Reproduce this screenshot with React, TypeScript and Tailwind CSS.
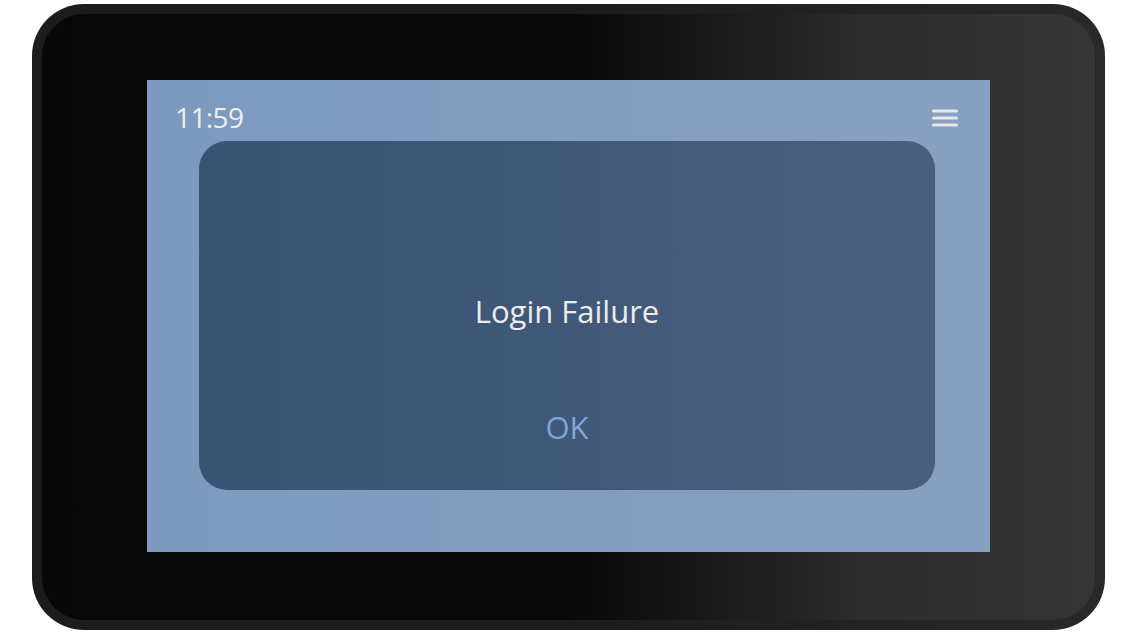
import React from "react";

const font = { fontFamily: '"Open Sans", "Noto Sans", sans-serif' };

function MenuIcon() {
  return (
    <svg width="26" height="18" viewBox="0 0 26 18" className="text-[#e8e8ea]">
      <path d="M1.5 2h23M1.5 9h23M1.5 16h23" stroke="currentColor" strokeWidth="3" strokeLinecap="round" />
    </svg>
  );
}

export default function App() {
  return (
    <div className="w-[1138px] h-[640px] bg-white overflow-hidden" style={font}>
      <div className="ml-[32px] mt-[4px] w-[1073px] h-[626px] rounded-[52px] p-[10px] bg-gradient-to-r from-[#1c1c1c] via-[#1c1c1c] to-[#292929]">
        <div className="w-full h-full rounded-[42px] bg-[linear-gradient(to_right,#070707_0%,#080808_50%,#2c2c2c_78%,#353535_100%)] pl-[105px] pt-[66px]">
          <div className="w-[843px] h-[472px] bg-gradient-to-r from-[#7d99bf] to-[#88a0c1] pt-[21px] px-[28px]">
            <div className="flex items-center justify-between h-[32px]">
              <span className="text-[28px] leading-none text-[#eeeef0] tracking-[-0.6px]">11:59</span>
              <div className="mr-[4px] mt-[2px]">
                <MenuIcon />
              </div>
            </div>
            <div className="ml-[24px] mt-[8px] w-[736px] h-[349px] rounded-[28px] bg-gradient-to-r from-[#385373] to-[#4a5f7e] flex flex-col items-center">
              <div className="mt-[149px] text-[31px] leading-[42px] text-[#ececef]">Login Failure</div>
              <div className="mt-[74px] text-[31px] leading-[42px] text-[#7fa5d9]">OK</div>
            </div>
          </div>
        </div>
      </div>
    </div>
  );
}
